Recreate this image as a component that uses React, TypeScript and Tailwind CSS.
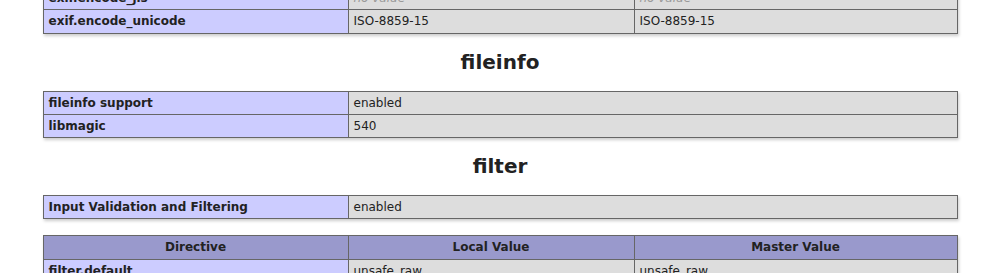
type Row = [string, string] | [string, string, string];

const cell = "border border-[#666] px-[5px] py-[4px] leading-[14.25px] align-baseline";

function NoValue() {
  return <i className="text-[#999]">no value</i>;
}

function Value({ v }: { v: string }) {
  return v === "" ? <NoValue /> : <>{v}</>;
}

function InfoTable({ rows, head }: { rows: Row[]; head?: string[] }) {
  const three = rows[0].length === 3;
  return (
    <table className="mx-auto w-[915px] border-collapse text-left text-[12px] shadow-[1px_2px_3px_#ccc]">
      {three && (
        <colgroup>
          <col className="w-[305px]" />
          <col className="w-[286px]" />
          <col />
        </colgroup>
      )}
      {!three && (
        <colgroup>
          <col className="w-[305px]" />
          <col />
        </colgroup>
      )}
      <tbody>
        {head && (
          <tr className="bg-[#99c] font-bold">
            {head.map((h) => (
              <th key={h} className={`${cell} text-center`}>
                {h}
              </th>
            ))}
          </tr>
        )}
        {rows.map((r) => (
          <tr key={r[0]}>
            <td className={`${cell} bg-[#ccf] font-bold`}>{r[0]}</td>
            {r.slice(1).map((v, i) => (
              <td key={i} className={`${cell} bg-[#ddd] break-all`}>
                <Value v={v} />
              </td>
            ))}
          </tr>
        ))}
      </tbody>
    </table>
  );
}

function Heading({ children }: { children: string }) {
  return (
    <h2 className="my-[16px] text-center text-[20px] font-bold leading-[25px]">
      {children}
    </h2>
  );
}

export default function App() {
  return (
    <div
      className="h-[273px] overflow-hidden bg-white text-[#222]"
      style={{ fontFamily: '"DejaVu Sans", "Liberation Sans", sans-serif' }}
    >
      <div className="-mt-[14px]">
        <InfoTable
          rows={[
            ["exif.encode_jis", "", ""],
            ["exif.encode_unicode", "ISO-8859-15", "ISO-8859-15"],
          ]}
        />

        <Heading>fileinfo</Heading>
        <InfoTable
          rows={[
            ["fileinfo support", "enabled"],
            ["libmagic", "540"],
          ]}
        />

        <Heading>filter</Heading>
        <InfoTable rows={[["Input Validation and Filtering", "enabled"]]} />

        <div className="mt-[16px]">
          <InfoTable
            head={["Directive", "Local Value", "Master Value"]}
            rows={[
              ["filter.default", "unsafe_raw", "unsafe_raw"],
              ["filter.default_flags", "", ""],
            ]}
          />
        </div>
      </div>
    </div>
  );
}
